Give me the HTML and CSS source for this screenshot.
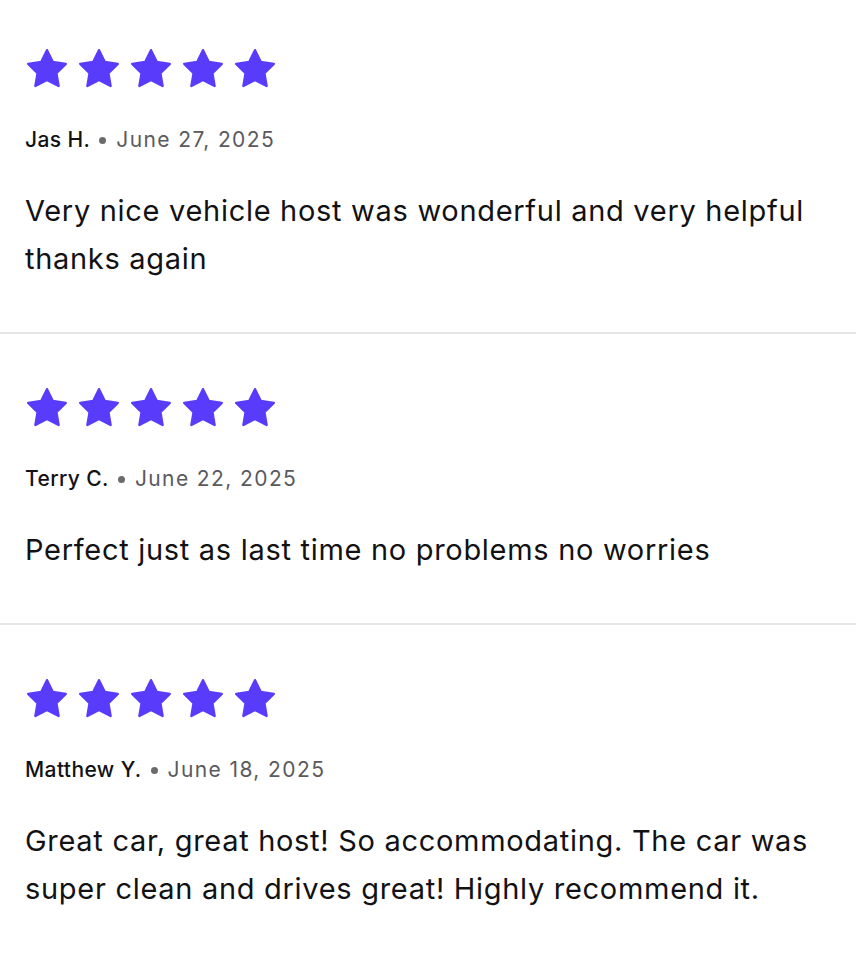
FILE: index.html
```html
<!DOCTYPE html>
<html>
<head>
<meta charset="utf-8">
<link rel="stylesheet" href="styles.css">
</head>
<body>
<div class="reviews">
  <div class="review">
    <div class="stars">
      <svg class="star" viewBox="0 0 24 24"><path d="M12 2.6l2.9 5.9 6.5.95-4.7 4.6 1.1 6.45L12 17.45l-5.8 3.05 1.1-6.45-4.7-4.6 6.5-.95z"/></svg>
      <svg class="star" viewBox="0 0 24 24"><path d="M12 2.6l2.9 5.9 6.5.95-4.7 4.6 1.1 6.45L12 17.45l-5.8 3.05 1.1-6.45-4.7-4.6 6.5-.95z"/></svg>
      <svg class="star" viewBox="0 0 24 24"><path d="M12 2.6l2.9 5.9 6.5.95-4.7 4.6 1.1 6.45L12 17.45l-5.8 3.05 1.1-6.45-4.7-4.6 6.5-.95z"/></svg>
      <svg class="star" viewBox="0 0 24 24"><path d="M12 2.6l2.9 5.9 6.5.95-4.7 4.6 1.1 6.45L12 17.45l-5.8 3.05 1.1-6.45-4.7-4.6 6.5-.95z"/></svg>
      <svg class="star" viewBox="0 0 24 24"><path d="M12 2.6l2.9 5.9 6.5.95-4.7 4.6 1.1 6.45L12 17.45l-5.8 3.05 1.1-6.45-4.7-4.6 6.5-.95z"/></svg>
    </div>
    <p class="meta"><span class="name">Jas H.</span><span class="dot"></span><span class="date">June 27, 2025</span></p>
    <p class="text">Very nice vehicle host was wonderful and very helpful thanks again</p>
  </div>
  <div class="review">
    <div class="stars">
      <svg class="star" viewBox="0 0 24 24"><path d="M12 2.6l2.9 5.9 6.5.95-4.7 4.6 1.1 6.45L12 17.45l-5.8 3.05 1.1-6.45-4.7-4.6 6.5-.95z"/></svg>
      <svg class="star" viewBox="0 0 24 24"><path d="M12 2.6l2.9 5.9 6.5.95-4.7 4.6 1.1 6.45L12 17.45l-5.8 3.05 1.1-6.45-4.7-4.6 6.5-.95z"/></svg>
      <svg class="star" viewBox="0 0 24 24"><path d="M12 2.6l2.9 5.9 6.5.95-4.7 4.6 1.1 6.45L12 17.45l-5.8 3.05 1.1-6.45-4.7-4.6 6.5-.95z"/></svg>
      <svg class="star" viewBox="0 0 24 24"><path d="M12 2.6l2.9 5.9 6.5.95-4.7 4.6 1.1 6.45L12 17.45l-5.8 3.05 1.1-6.45-4.7-4.6 6.5-.95z"/></svg>
      <svg class="star" viewBox="0 0 24 24"><path d="M12 2.6l2.9 5.9 6.5.95-4.7 4.6 1.1 6.45L12 17.45l-5.8 3.05 1.1-6.45-4.7-4.6 6.5-.95z"/></svg>
    </div>
    <p class="meta"><span class="name">Terry C.</span><span class="dot"></span><span class="date">June 22, 2025</span></p>
    <p class="text">Perfect just as last time no problems no worries</p>
  </div>
  <div class="review">
    <div class="stars">
      <svg class="star" viewBox="0 0 24 24"><path d="M12 2.6l2.9 5.9 6.5.95-4.7 4.6 1.1 6.45L12 17.45l-5.8 3.05 1.1-6.45-4.7-4.6 6.5-.95z"/></svg>
      <svg class="star" viewBox="0 0 24 24"><path d="M12 2.6l2.9 5.9 6.5.95-4.7 4.6 1.1 6.45L12 17.45l-5.8 3.05 1.1-6.45-4.7-4.6 6.5-.95z"/></svg>
      <svg class="star" viewBox="0 0 24 24"><path d="M12 2.6l2.9 5.9 6.5.95-4.7 4.6 1.1 6.45L12 17.45l-5.8 3.05 1.1-6.45-4.7-4.6 6.5-.95z"/></svg>
      <svg class="star" viewBox="0 0 24 24"><path d="M12 2.6l2.9 5.9 6.5.95-4.7 4.6 1.1 6.45L12 17.45l-5.8 3.05 1.1-6.45-4.7-4.6 6.5-.95z"/></svg>
      <svg class="star" viewBox="0 0 24 24"><path d="M12 2.6l2.9 5.9 6.5.95-4.7 4.6 1.1 6.45L12 17.45l-5.8 3.05 1.1-6.45-4.7-4.6 6.5-.95z"/></svg>
    </div>
    <p class="meta"><span class="name">Matthew Y.</span><span class="dot"></span><span class="date">June 18, 2025</span></p>
    <p class="text">Great car, great host! So accommodating. The car was super clean and drives great! Highly recommend it.</p>
  </div>
</div>
</body>
</html>
```
FILE: styles.css
```css
html, body {
  margin: 0;
  padding: 0;
  background: #ffffff;
}
body {
  font-family: Inter, "Noto Sans", "Liberation Sans", sans-serif;
  color: #121214;
}
.reviews {
  display: flex;
  flex-direction: column;
}
.review {
  padding: 50px 25px 49px;
  border-bottom: 2px solid #e6e6e6;
}
.review:first-child {
  padding-top: 45px;
}
.review:last-child {
  border-bottom: none;
}
.stars {
  display: flex;
  gap: 4px;
  margin-left: -2px;
}
.star {
  width: 48px;
  height: 48px;
  fill: #593cfb;
  stroke: #593cfb;
  stroke-width: 1.2;
  stroke-linejoin: round;
}
.meta {
  margin: 33px 0 0;
  font-size: 21px;
  line-height: 28px;
  display: flex;
  align-items: center;
  gap: 9px;
}
.name {
  font-weight: 500;
  color: #121214;
  letter-spacing: 0.4px;
}
.dot {
  width: 7px;
  height: 7px;
  border-radius: 50%;
  background: #6b6b6b;
  margin-right: 1px;
}
.date {
  color: #5a5a5e;
  letter-spacing: 1.4px;
}
.text {
  margin: 33px 0 0;
  font-size: 29px;
  line-height: 48px;
  letter-spacing: 0.7px;
  color: #121214;
}
```
